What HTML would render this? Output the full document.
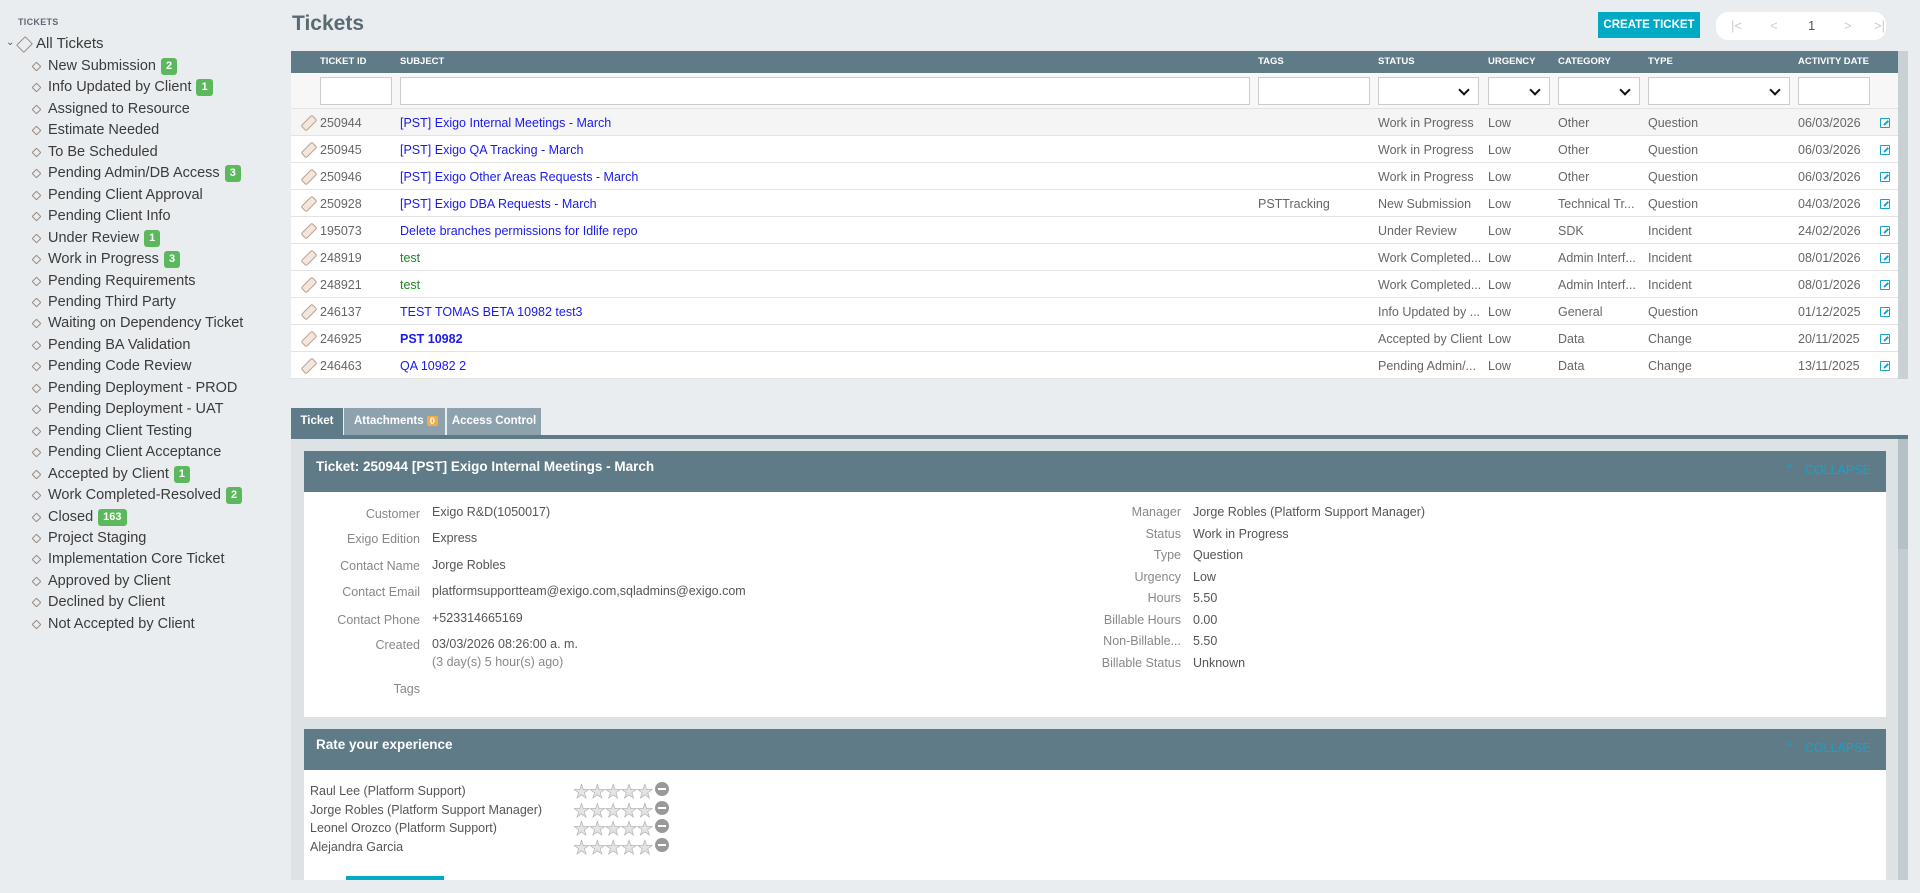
<!DOCTYPE html>
<html><head><meta charset="utf-8"><style>
*{box-sizing:border-box;margin:0;padding:0}
body{width:1920px;height:893px;background:#e9edf0;font-family:"Liberation Sans",sans-serif;position:relative;overflow:hidden;color:#555}
.a{position:absolute;white-space:nowrap}
.side{font-size:14.5px;color:#3b3b3b}
.tag{display:inline-block;width:9px;height:9px;border:1.3px solid #9a8a80;transform:rotate(45deg);border-radius:1px}
.badge{display:inline-block;background:#5cb85c;color:#fff;font-size:11px;font-weight:bold;padding:2px 5px;border-radius:3px;margin-left:5px;vertical-align:1px;line-height:13px}
.th{font-size:9.5px;font-weight:bold;color:#fff;top:56px}
.inp{position:absolute;top:77px;height:28px;background:#fff;border:1px solid #ccc}
.sel:after{content:"";position:absolute;right:10px;top:8px;width:6px;height:6px;border-right:2px solid #111;border-bottom:2px solid #111;transform:rotate(45deg)}
.row{position:absolute;left:291px;width:1607px;height:27px;border-bottom:1px solid #e3e3e3;background:#fff;font-size:12.5px;color:#666}
.row span{position:absolute;top:7px;white-space:nowrap}
.row .tk{position:absolute;left:14px;top:6px;width:8px;height:16px;border:1.3px solid #b8a595;background:#f3e6dc;transform:rotate(45deg);border-radius:2px}
.lk{color:#1a1aee}
.gr{color:#1e8a1e}
.ic{position:absolute;left:1589px;top:9px;width:10px;height:10px;border:1.5px solid #17a2c8;border-radius:1px}
.ic:after{content:"";position:absolute;left:2px;top:3px;width:6px;height:1.5px;background:#17a2c8;transform:rotate(-45deg)}
.lbl{font-size:12.5px;color:#888;text-align:right}
.val{font-size:12.5px;color:#555}
.sr{height:18.7px;line-height:18px;overflow:visible;white-space:nowrap}
.star{color:#e4e4e4;font-size:19px;-webkit-text-stroke:0.6px #aaa;letter-spacing:-1.2px}
.mn{display:inline-block;width:14px;height:14px;border-radius:50%;background:#999;vertical-align:2px;margin-left:3px;position:relative}
.mn:after{content:"";position:absolute;left:3px;top:6px;width:8px;height:2px;background:#fff}
</style></head><body>
<!-- sidebar -->
<div class="a" style="left:18px;top:17px;font-size:9px;font-weight:bold;color:#667;letter-spacing:.3px">TICKETS</div>
<div class="a" style="left:6px;top:37px;font-size:10px;color:#555">⌄</div>
<div class="a" style="left:19px;top:38px"><span class="tag" style="width:11px;height:13px"></span></div>
<div class="a side" style="left:36px;top:35px;font-size:15px">All Tickets</div>
<div class="a side" style="left:33px;top:56px;line-height:21.45px">
<div><span class="tag" style="width:7px;height:7px;margin-right:8px"></span>New Submission<span class="badge">2</span></div>
<div><span class="tag" style="width:7px;height:7px;margin-right:8px"></span>Info Updated by Client<span class="badge">1</span></div>
<div><span class="tag" style="width:7px;height:7px;margin-right:8px"></span>Assigned to Resource</div>
<div><span class="tag" style="width:7px;height:7px;margin-right:8px"></span>Estimate Needed</div>
<div><span class="tag" style="width:7px;height:7px;margin-right:8px"></span>To Be Scheduled</div>
<div><span class="tag" style="width:7px;height:7px;margin-right:8px"></span>Pending Admin/DB Access<span class="badge">3</span></div>
<div><span class="tag" style="width:7px;height:7px;margin-right:8px"></span>Pending Client Approval</div>
<div><span class="tag" style="width:7px;height:7px;margin-right:8px"></span>Pending Client Info</div>
<div><span class="tag" style="width:7px;height:7px;margin-right:8px"></span>Under Review<span class="badge">1</span></div>
<div><span class="tag" style="width:7px;height:7px;margin-right:8px"></span>Work in Progress<span class="badge">3</span></div>
<div><span class="tag" style="width:7px;height:7px;margin-right:8px"></span>Pending Requirements</div>
<div><span class="tag" style="width:7px;height:7px;margin-right:8px"></span>Pending Third Party</div>
<div><span class="tag" style="width:7px;height:7px;margin-right:8px"></span>Waiting on Dependency Ticket</div>
<div><span class="tag" style="width:7px;height:7px;margin-right:8px"></span>Pending BA Validation</div>
<div><span class="tag" style="width:7px;height:7px;margin-right:8px"></span>Pending Code Review</div>
<div><span class="tag" style="width:7px;height:7px;margin-right:8px"></span>Pending Deployment - PROD</div>
<div><span class="tag" style="width:7px;height:7px;margin-right:8px"></span>Pending Deployment - UAT</div>
<div><span class="tag" style="width:7px;height:7px;margin-right:8px"></span>Pending Client Testing</div>
<div><span class="tag" style="width:7px;height:7px;margin-right:8px"></span>Pending Client Acceptance</div>
<div><span class="tag" style="width:7px;height:7px;margin-right:8px"></span>Accepted by Client<span class="badge">1</span></div>
<div><span class="tag" style="width:7px;height:7px;margin-right:8px"></span>Work Completed-Resolved<span class="badge">2</span></div>
<div><span class="tag" style="width:7px;height:7px;margin-right:8px"></span>Closed<span class="badge">163</span></div>
<div><span class="tag" style="width:7px;height:7px;margin-right:8px"></span>Project Staging</div>
<div><span class="tag" style="width:7px;height:7px;margin-right:8px"></span>Implementation Core Ticket</div>
<div><span class="tag" style="width:7px;height:7px;margin-right:8px"></span>Approved by Client</div>
<div><span class="tag" style="width:7px;height:7px;margin-right:8px"></span>Declined by Client</div>
<div><span class="tag" style="width:7px;height:7px;margin-right:8px"></span>Not Accepted by Client</div>
</div>
<!-- title -->
<div class="a" style="left:292px;top:12px;font-size:21px;font-weight:bold;color:#5a6a72">Tickets</div>
<div class="a" style="left:1598px;top:12px;width:102px;height:26px;background:#00a9c4;color:#fff;font-size:11.5px;font-weight:bold;text-align:center;line-height:26px">CREATE TICKET</div>
<div class="a" style="left:1716px;top:12px;width:170px;height:28px;background:#fff;border-radius:12px;font-size:13px;color:#ccc">
<span class="a" style="left:15px;top:6px">|&lt;</span><span class="a" style="left:54px;top:6px">&lt;</span><span class="a" style="left:92px;top:6px;color:#555">1</span><span class="a" style="left:128px;top:6px">&gt;</span><span class="a" style="left:158px;top:6px">&gt;|</span></div>
<!-- table -->
<div class="a" style="left:291px;top:51px;width:1607px;height:22px;background:#5f7b88"></div>
<div class="a" style="left:1898px;top:51px;width:10px;height:328px;background:#c9d1d5"></div>
<div class="a th" style="left:320px">TICKET ID</div>
<div class="a th" style="left:400px">SUBJECT</div>
<div class="a th" style="left:1258px">TAGS</div>
<div class="a th" style="left:1378px">STATUS</div>
<div class="a th" style="left:1488px">URGENCY</div>
<div class="a th" style="left:1558px">CATEGORY</div>
<div class="a th" style="left:1648px">TYPE</div>
<div class="a th" style="left:1798px">ACTIVITY DATE</div>
<div class="a" style="left:291px;top:73px;width:1607px;height:36px;background:#f7f7f7;border-bottom:1px solid #e3e3e3"></div>
<div class="inp" style="left:320px;width:72px"></div>
<div class="inp" style="left:400px;width:850px"></div>
<div class="inp" style="left:1258px;width:112px"></div>
<div class="inp sel" style="left:1378px;width:101px"></div>
<div class="inp sel" style="left:1488px;width:62px"></div>
<div class="inp sel" style="left:1558px;width:82px"></div>
<div class="inp sel" style="left:1648px;width:142px"></div>
<div class="inp" style="left:1798px;width:72px"></div>

<div class="row" style="top:109px;background:#f5f5f5"><i class="tk"></i><span style="left:29px">250944</span><span class="lk" style="left:109px">[PST] Exigo Internal Meetings - March</span><span style="left:1087px">Work in Progress</span><span style="left:1197px">Low</span><span style="left:1267px">Other</span><span style="left:1357px">Question</span><span style="left:1507px">06/03/2026</span><i class="ic"></i></div>
<div class="row" style="top:136px"><i class="tk"></i><span style="left:29px">250945</span><span class="lk" style="left:109px">[PST] Exigo QA Tracking - March</span><span style="left:1087px">Work in Progress</span><span style="left:1197px">Low</span><span style="left:1267px">Other</span><span style="left:1357px">Question</span><span style="left:1507px">06/03/2026</span><i class="ic"></i></div>
<div class="row" style="top:163px"><i class="tk"></i><span style="left:29px">250946</span><span class="lk" style="left:109px">[PST] Exigo Other Areas Requests - March</span><span style="left:1087px">Work in Progress</span><span style="left:1197px">Low</span><span style="left:1267px">Other</span><span style="left:1357px">Question</span><span style="left:1507px">06/03/2026</span><i class="ic"></i></div>
<div class="row" style="top:190px"><i class="tk"></i><span style="left:29px">250928</span><span class="lk" style="left:109px">[PST] Exigo DBA Requests - March</span><span style="left:967px">PSTTracking</span><span style="left:1087px">New Submission</span><span style="left:1197px">Low</span><span style="left:1267px">Technical Tr...</span><span style="left:1357px">Question</span><span style="left:1507px">04/03/2026</span><i class="ic"></i></div>
<div class="row" style="top:217px"><i class="tk"></i><span style="left:29px">195073</span><span class="lk" style="left:109px">Delete branches permissions for Idlife repo</span><span style="left:1087px">Under Review</span><span style="left:1197px">Low</span><span style="left:1267px">SDK</span><span style="left:1357px">Incident</span><span style="left:1507px">24/02/2026</span><i class="ic"></i></div>
<div class="row" style="top:244px"><i class="tk"></i><span style="left:29px">248919</span><span class="gr" style="left:109px">test</span><span style="left:1087px">Work Completed...</span><span style="left:1197px">Low</span><span style="left:1267px">Admin Interf...</span><span style="left:1357px">Incident</span><span style="left:1507px">08/01/2026</span><i class="ic"></i></div>
<div class="row" style="top:271px"><i class="tk"></i><span style="left:29px">248921</span><span class="gr" style="left:109px">test</span><span style="left:1087px">Work Completed...</span><span style="left:1197px">Low</span><span style="left:1267px">Admin Interf...</span><span style="left:1357px">Incident</span><span style="left:1507px">08/01/2026</span><i class="ic"></i></div>
<div class="row" style="top:298px"><i class="tk"></i><span style="left:29px">246137</span><span class="lk" style="left:109px">TEST TOMAS BETA 10982 test3</span><span style="left:1087px">Info Updated by ...</span><span style="left:1197px">Low</span><span style="left:1267px">General</span><span style="left:1357px">Question</span><span style="left:1507px">01/12/2025</span><i class="ic"></i></div>
<div class="row" style="top:325px"><i class="tk"></i><span style="left:29px">246925</span><span class="lk" style="left:109px;font-weight:bold">PST 10982</span><span style="left:1087px">Accepted by Client</span><span style="left:1197px">Low</span><span style="left:1267px">Data</span><span style="left:1357px">Change</span><span style="left:1507px">20/11/2025</span><i class="ic"></i></div>
<div class="row" style="top:352px"><i class="tk"></i><span style="left:29px">246463</span><span class="lk" style="left:109px">QA 10982 2</span><span style="left:1087px">Pending Admin/...</span><span style="left:1197px">Low</span><span style="left:1267px">Data</span><span style="left:1357px">Change</span><span style="left:1507px">13/11/2025</span><i class="ic"></i></div>

<!-- tabs -->
<div class="a" style="left:291px;top:408px;width:52px;height:28px;background:#5f7b88;color:#fff;font-size:11.5px;font-weight:bold;text-align:center;line-height:26px">Ticket</div>
<div class="a" style="left:344px;top:408px;width:101px;height:28px;background:#8da2ad;color:#fff;font-size:11.5px;font-weight:bold;padding-left:10px;line-height:26px">Attachments <span style="background:#f0ad4e;padding:0 3px;font-size:9px;border-radius:2px">0</span></div>
<div class="a" style="left:447px;top:408px;width:94px;height:28px;background:#8da2ad;color:#fff;font-size:11.5px;font-weight:bold;text-align:center;line-height:26px">Access Control</div>
<div class="a" style="left:291px;top:435px;width:1617px;height:4px;background:#5f7b88"></div>
<div class="a" style="left:291px;top:439px;width:1617px;height:441px;background:#dde2e5"></div>
<div class="a" style="left:1898px;top:439px;width:10px;height:441px;background:#c3ccd0"></div>
<div class="a" style="left:1898px;top:439px;width:10px;height:110px;background:#b4c0c6"></div>
<!-- panel1 -->
<div class="a" style="left:304px;top:451px;width:1582px;height:41px;background:#5f7b88"></div>
<div class="a" style="left:316px;top:459px;font-size:13.5px;font-weight:bold;color:#fff">Ticket: 250944 [PST] Exigo Internal Meetings - March</div>
<div class="a" style="left:1784px;top:462px;font-size:12.5px;color:#17a2c8">⌃&nbsp;&nbsp;&nbsp;COLLAPSE</div>
<div class="a" style="left:304px;top:492px;width:1582px;height:225px;background:#fff"></div>
<div class="a lbl" style="left:300px;width:120px;top:507px">Customer</div>
<div class="a lbl" style="left:300px;width:120px;top:532px">Exigo Edition</div>
<div class="a lbl" style="left:300px;width:120px;top:559px">Contact Name</div>
<div class="a lbl" style="left:300px;width:120px;top:585px">Contact Email</div>
<div class="a lbl" style="left:300px;width:120px;top:613px">Contact Phone</div>
<div class="a lbl" style="left:300px;width:120px;top:638px">Created</div>
<div class="a lbl" style="left:300px;width:120px;top:682px">Tags</div>
<div class="a val" style="left:432px;top:505px">Exigo R&amp;D(1050017)</div>
<div class="a val" style="left:432px;top:531px">Express</div>
<div class="a val" style="left:432px;top:558px">Jorge Robles</div>
<div class="a val" style="left:432px;top:584px">platformsupportteam@exigo.com,sqladmins@exigo.com</div>
<div class="a val" style="left:432px;top:611px">+523314665169</div>
<div class="a val" style="left:432px;top:637px">03/03/2026 08:26:00 a. m.</div>
<div class="a val" style="left:432px;top:655px;color:#888">(3 day(s) 5 hour(s) ago)</div>
<div class="a lbl" style="left:1000px;width:181px;top:502px;line-height:21.5px">Manager<br>Status<br>Type<br>Urgency<br>Hours<br>Billable Hours<br>Non-Billable...<br>Billable Status</div>
<div class="a val" style="left:1193px;top:502px;line-height:21.5px">Jorge Robles (Platform Support Manager)<br>Work in Progress<br>Question<br>Low<br>5.50<br>0.00<br>5.50<br>Unknown</div>
<!-- panel2 -->
<div class="a" style="left:304px;top:729px;width:1582px;height:41px;background:#5f7b88"></div>
<div class="a" style="left:316px;top:737px;font-size:13.5px;font-weight:bold;color:#fff">Rate your experience</div>
<div class="a" style="left:1784px;top:740px;font-size:12.5px;color:#17a2c8">⌃&nbsp;&nbsp;&nbsp;COLLAPSE</div>
<div class="a" style="left:304px;top:770px;width:1582px;height:110px;background:#fff"></div>
<div class="a" style="left:310px;top:782px;font-size:12.5px;color:#555;line-height:18.7px">Raul Lee (Platform Support)<br>Jorge Robles (Platform Support Manager)<br>Leonel Orozco (Platform Support)<br>Alejandra Garcia</div>
<div class="a" style="left:573px;top:782px">
<div class="sr"><span class="star">★★★★★</span><span class="mn"></span></div>
<div class="sr"><span class="star">★★★★★</span><span class="mn"></span></div>
<div class="sr"><span class="star">★★★★★</span><span class="mn"></span></div>
<div class="sr"><span class="star">★★★★★</span><span class="mn"></span></div>
</div>
<div class="a" style="left:346px;top:876px;width:98px;height:4px;background:#00a9c4"></div>
</body></html>
